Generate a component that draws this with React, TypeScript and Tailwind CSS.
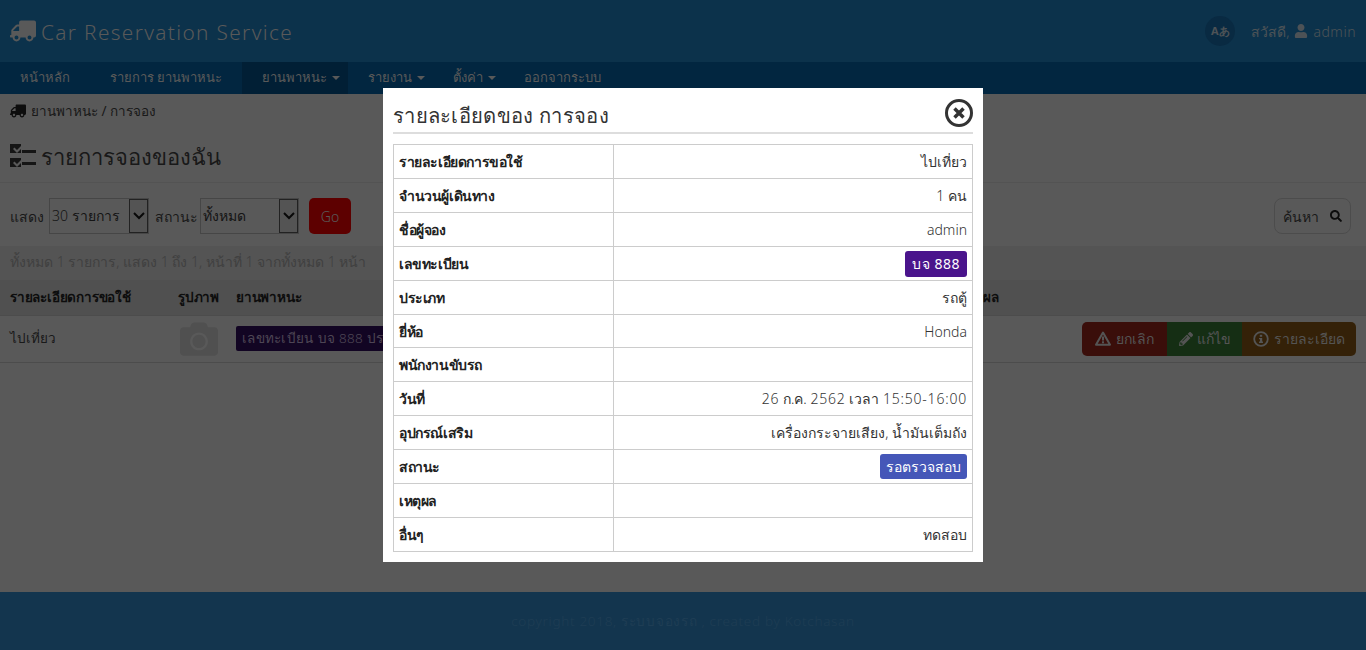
import React from 'react';
import { FaTruck, FaUser, FaSearch, FaCamera, FaPencilAlt } from 'react-icons/fa';

const font = { fontFamily: '"Noto Sans", "Open Sans", "DejaVu Sans", sans-serif' };

const Num = ({ children }: { children: React.ReactNode }) => <span className="tracking-[0.8px]">{children}</span>;

const detailRows: { label: string; value?: React.ReactNode; chip?: string }[] = [
  { label: 'รายละเอียดการขอใช้', value: 'ไปเที่ยว' },
  { label: 'จำนวนผู้เดินทาง', value: '1 คน' },
  { label: 'ชื่อผู้จอง', value: 'admin' },
  { label: 'เลขทะเบียน', chip: 'purple', value: 'บจ 888' },
  { label: 'ประเภท', value: 'รถตู้' },
  { label: 'ยี่ห้อ', value: 'Honda' },
  { label: 'พนักงานขับรถ' },
  {
    label: 'วันที่',
    value: (
      <>
        <Num>26</Num> ก.ค. <Num>2562</Num> เวลา <Num>15:50-16:00</Num>
      </>
    ),
  },
  { label: 'อุปกรณ์เสริม', value: 'เครื่องกระจายเสียง, น้ำมันเต็มถัง' },
  { label: 'สถานะ', chip: 'indigo', value: 'รอตรวจสอบ' },
  { label: 'เหตุผล' },
  { label: 'อื่นๆ', value: 'ทดสอบ' },
];

const navItems = [
  { label: 'หน้าหลัก' },
  { label: 'รายการ ยานพาหนะ' },
  { label: 'ยานพาหนะ', caret: true, active: true },
  { label: 'รายงาน', caret: true },
  { label: 'ตั้งค่า', caret: true },
  { label: 'ออกจากระบบ' },
];

const ChecklistIcon = () => (
  <svg width="27" height="27" viewBox="0 0 27 27" fill="#2a2a2a">
    <path d="M0 1h11v2l-4 4-2.500-2.500-1.500 1.500 4 4 4-4v4H0z" />
    <rect x="12" y="7" width="14" height="3" />
    <path d="M0 15h11v2l-4 4-2.500-2.500-1.500 1.500 4 4 4-4v4H0z" />
    <rect x="12" y="19" width="14" height="3" />
  </svg>
);

const TriangleIcon = () => (
  <svg width="16" height="15" viewBox="0 0 16 15">
    <path d="M8 1.500L15 13.700H1z" fill="none" stroke="#a8a8a8" strokeWidth="2" strokeLinejoin="round" />
    <rect x="7" y="5.500" width="2" height="4" fill="#a8a8a8" />
    <rect x="7" y="10.300" width="2" height="2" fill="#a8a8a8" />
  </svg>
);

const InfoIcon = () => (
  <svg width="16" height="16" viewBox="0 0 16 16">
    <circle cx="8" cy="8" r="6.800" fill="none" stroke="#a8a8a8" strokeWidth="1.800" />
    <rect x="6.800" y="3.800" width="2.400" height="2" fill="#a8a8a8" />
    <path d="M6 7h3.200v3.500H10V12H6v-1.500h1V8.300H6z" fill="#a8a8a8" />
  </svg>
);

const FakeSelect = ({ text, w }: { text: string; w: string }) => (
  <div className={`flex h-[36px] ${w} border border-[#8c8c8c] bg-[#b2b2b2]`}>
    <span className="flex-1 pl-[2px] text-[14px] leading-[34px] text-[#2a2a2a]">{text}</span>
    <span className="flex w-[19px] items-center justify-center border border-[#444] bg-[#a8a8a8]">
      <svg width="12" height="8" viewBox="0 0 12 8" fill="none" stroke="#111" strokeWidth="2">
        <path d="M1 1l5 5 5-5" />
      </svg>
    </span>
  </div>
);

export default function App() {
  return (
    <div className="relative flex h-[650px] w-[1366px] flex-col overflow-hidden bg-[#b2b2b2] text-[#333]" style={font}>
      {/* header */}
      <header className="flex h-[62px] items-center justify-between bg-[#186496] pl-[10px] pr-[10px]">
        <div className="flex items-center gap-[5px] pt-[3px] text-[#b2b2b2]">
          <FaTruck className="-mt-[3px] -scale-x-100 text-[26px]" />
          <span className="text-[20.8px] font-light tracking-[1.35px]">Car Reservation Service</span>
        </div>
        <div className="flex items-center text-[14px] font-light text-[#9aa5ad]">
          <span className="mr-[16px] flex h-[30px] w-[30px] items-center justify-center rounded-full bg-[#125484] text-[11px] font-bold">
            Aあ
          </span>
          <span>สวัสดี,</span>
          <FaUser className="mx-[5px] text-[14px]" />
          <span className="tracking-[0.5px]">admin</span>
        </div>
      </header>

      {/* nav */}
      <nav className="flex h-[32px] bg-[#044c80] text-[13px] font-light text-[#b2b2b2]">
        {navItems.map((item) => (
          <div
            key={item.label}
            className={`flex items-center gap-[5px] pl-[20px] ${item.caret ? 'pr-[8px]' : 'pr-[20px]'} ${item.active ? 'bg-[#033f6b]' : ''}`}
          >
            {item.label}
            {item.caret && <span className="h-0 w-0 border-x-[4px] border-t-[4px] border-x-transparent border-t-[#b2b2b2]" />}
          </div>
        ))}
      </nav>

      {/* breadcrumb */}
      <div className="flex h-[34px] items-center gap-[5px] pl-[10px] text-[13.5px]">
        <FaTruck className="-scale-x-100 text-[16px] text-[#1a1a1a]" />
        <span>ยานพาหนะ / การจอง</span>
      </div>

      <div className="flex h-[55px] items-center gap-[4px] border-b border-[#a6a6a6] pl-[10px] pt-[3px] text-[22px] font-light">
        <ChecklistIcon />
        <span>รายการจองของฉัน</span>
      </div>

      {/* filters */}
      <div className="flex h-[63px] items-center justify-between pl-[10px] pr-[15px] pt-[3px] text-[14px] font-light">
        <div className="flex items-center gap-[5px]">
          <span>แสดง</span>
          <FakeSelect text="30 รายการ" w="w-[100px]" />
          <span className="ml-[1px] mr-[-3px]">สถานะ</span>
          <FakeSelect text="ทั้งหมด" w="w-[99px]" />
          <span className="ml-[5px] flex h-[36px] w-[42px] items-center justify-center rounded-[5px] bg-[#bb0000] text-[14px] text-[#b2b2b2]">
            Go
          </span>
        </div>
        <div className="flex h-[36px] w-[77px] items-center justify-between rounded-[8px] border border-[#999] px-[8px] text-[14px]">
          <span>ค้นหา</span>
          <FaSearch className="text-[12px] text-[#1a1a1a]" />
        </div>
      </div>

      <div className="flex h-[34px] items-center bg-[#a8a8a8] pb-[3px] pl-[10px] text-[14px] font-light text-[#808080]">
        ทั้งหมด 1 รายการ, แสดง 1 ถึง 1, หน้าที่ 1 จากทั้งหมด 1 หน้า
      </div>

      {/* list table */}
      <table className="w-full table-fixed border-collapse text-[13.5px]">
        <tbody>
          <tr className="h-[35px] border-b border-[#999] bg-[#a0a0a0] font-semibold tracking-[-0.2px] text-[#1a1a1a]">
            <td className="w-[178px] pl-[10px]">รายละเอียดการขอใช้</td>
            <td className="w-[58px]">รูปภาพ</td>
            <td className="w-[747px]">ยานพาหนะ</td>
            <td>ผล</td>
          </tr>
          <tr className="h-[47px] border-b border-[#999] font-light">
            <td className="pl-[10px]">ไปเที่ยว</td>
            <td>
              <FaCamera className="ml-[2px] text-[38px] text-[#a0a0a0]" />
            </td>
            <td>
              <div className="w-[147px] overflow-hidden">
                <span className="inline-block h-[25px] whitespace-nowrap rounded-[2px] bg-[#250a46] px-[6px] leading-[25px] tracking-[0.3px] text-[#9a8aa8]">
                  เลขทะเบียน บจ 888 ประเภท
                </span>
              </div>
            </td>
            <td className="pr-[10px]">
              <div className="flex h-[34px] justify-end text-[14px] text-[#a8a8a8]">
                <span className="flex w-[85px] items-center justify-center gap-[5px] rounded-l-[5px] bg-[#741c15]">
                  <TriangleIcon />
                  ยกเลิก
                </span>
                <span className="flex w-[75px] items-center justify-center gap-[4px] bg-[#2a5c28]">
                  <FaPencilAlt className="text-[14px]" />
                  แก้ไข
                </span>
                <span className="flex w-[114px] items-center justify-center gap-[5px] rounded-r-[5px] bg-[#684310]">
                  <InfoIcon />
                  รายละเอียด
                </span>
              </div>
            </td>
          </tr>
        </tbody>
      </table>

      <div className="flex-1" />

      <footer className="flex h-[58px] items-center justify-center bg-[#266a9c] text-[13.5px] font-light tracking-[0.7px] text-[#3d7aa8]">
        copyright 2018, ระบบจองรถ , created by Kotchasan
      </footer>

      {/* modal */}
      <div className="absolute inset-0 flex justify-center bg-black/50 pt-[88px]">
        <div className="h-[474px] w-[600px] bg-white p-[10px] text-[#333]">
          <div className="flex h-[36px] items-center justify-between border-b-2 border-[#ddd]">
            <span className="pt-[1px] text-[20.2px] font-light tracking-[0.3px]">รายละเอียดของ การจอง</span>
            <svg width="28" height="28" viewBox="0 0 28 28" fill="none" stroke="#333" className="mb-[5px]">
              <circle cx="14" cy="14" r="12.500" strokeWidth="3" />
              <path d="M9.500 9.500l9 9M18.500 9.500l-9 9" strokeWidth="3.500" />
            </svg>
          </div>
          <table className="mt-[10px] w-[580px] table-fixed border-collapse text-[14px]">
            <tbody>
              {detailRows.map((row) => (
                <tr key={row.label} className={row.label === 'ยี่ห้อ' ? 'h-[33px]' : 'h-[34px]'}>
                  <td className="w-[220px] border border-[#ccc] px-[5px] font-semibold tracking-[-0.4px] text-[#222]">{row.label}</td>
                  <td className="border border-[#ccc] px-[5px] text-right font-light text-[#333]">
                    {row.chip ? (
                      <span
                        className={`inline-block rounded-[3px] font-normal text-white ${
                          row.chip === 'purple'
                            ? 'h-[26px] bg-[#4a148c] px-[7px] leading-[26px] tracking-[0.5px]'
                            : 'h-[25px] bg-[#4557b8] px-[6px] leading-[25px]'
                        }`}
                      >
                        {row.value}
                      </span>
                    ) : (
                      row.value
                    )}
                  </td>
                </tr>
              ))}
            </tbody>
          </table>
        </div>
      </div>
    </div>
  );
}
